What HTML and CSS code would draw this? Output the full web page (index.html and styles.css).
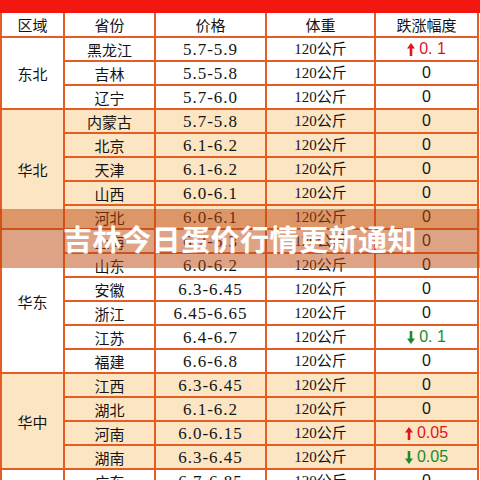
FILE: index.html
```html
<!DOCTYPE html>
<html lang="zh-CN">
<head>
<meta charset="utf-8">
<title>吉林今日蛋价行情更新通知</title>
<link rel="stylesheet" href="styles.css">
</head>
<body>
<div class="page">
  <div class="topbar"></div>
  <div class="grid">
    <div class="cell head">区域</div>
    <div class="cell head">省份</div>
    <div class="cell head">价格</div>
    <div class="cell head">体重</div>
    <div class="cell head">跌涨幅度</div>

    <div class="cell region span3">东北</div>
    <div class="cell prov">黑龙江</div><div class="cell price">5.7-5.9</div><div class="cell wt">120公斤</div><div class="cell chg"><span class="up"><svg class="arr" viewBox="0 0 8 13"><path d="M4 0 L8 5.5 L5.3 5.5 L5.3 13 L2.7 13 L2.7 5.5 L0 5.5 Z"/></svg>0. 1</span></div>
    <div class="cell prov">吉林</div><div class="cell price">5.5-5.8</div><div class="cell wt">120公斤</div><div class="cell chg">0</div>
    <div class="cell prov">辽宁</div><div class="cell price">5.7-6.0</div><div class="cell wt">120公斤</div><div class="cell chg">0</div>

    <div class="cell region tint span5">华北</div>
    <div class="cell prov tint">内蒙古</div><div class="cell price tint">5.7-5.8</div><div class="cell wt tint">120公斤</div><div class="cell chg tint">0</div>
    <div class="cell prov tint">北京</div><div class="cell price tint">6.1-6.2</div><div class="cell wt tint">120公斤</div><div class="cell chg tint">0</div>
    <div class="cell prov tint">天津</div><div class="cell price tint">6.1-6.2</div><div class="cell wt tint">120公斤</div><div class="cell chg tint">0</div>
    <div class="cell prov tint">山西</div><div class="cell price tint">6.0-6.1</div><div class="cell wt tint">120公斤</div><div class="cell chg tint">0</div>
    <div class="cell prov tint">河北</div><div class="cell price tint">6.0-6.1</div><div class="cell wt tint">120公斤</div><div class="cell chg tint">0</div>

    <div class="cell region span6">华东</div>
    <div class="cell prov">上海</div><div class="cell price">6.2-6.3</div><div class="cell wt">120公斤</div><div class="cell chg">0</div>
    <div class="cell prov">山东</div><div class="cell price">6.0-6.2</div><div class="cell wt">120公斤</div><div class="cell chg">0</div>
    <div class="cell prov">安徽</div><div class="cell price">6.3-6.45</div><div class="cell wt">120公斤</div><div class="cell chg">0</div>
    <div class="cell prov">浙江</div><div class="cell price">6.45-6.65</div><div class="cell wt">120公斤</div><div class="cell chg">0</div>
    <div class="cell prov">江苏</div><div class="cell price">6.4-6.7</div><div class="cell wt">120公斤</div><div class="cell chg"><span class="down"><svg class="arr" viewBox="0 0 8 13"><path d="M4 13 L8 7.5 L5.3 7.5 L5.3 0 L2.7 0 L2.7 7.5 L0 7.5 Z"/></svg>0. 1</span></div>
    <div class="cell prov">福建</div><div class="cell price">6.6-6.8</div><div class="cell wt">120公斤</div><div class="cell chg">0</div>

    <div class="cell region tint span4">华中</div>
    <div class="cell prov tint">江西</div><div class="cell price tint">6.3-6.45</div><div class="cell wt tint">120公斤</div><div class="cell chg tint">0</div>
    <div class="cell prov tint">湖北</div><div class="cell price tint">6.1-6.2</div><div class="cell wt tint">120公斤</div><div class="cell chg tint">0</div>
    <div class="cell prov tint">河南</div><div class="cell price tint">6.0-6.15</div><div class="cell wt tint">120公斤</div><div class="cell chg tint"><span class="up"><svg class="arr" viewBox="0 0 8 13"><path d="M4 0 L8 5.5 L5.3 5.5 L5.3 13 L2.7 13 L2.7 5.5 L0 5.5 Z"/></svg>0.05</span></div>
    <div class="cell prov tint">湖南</div><div class="cell price tint">6.3-6.45</div><div class="cell wt tint">120公斤</div><div class="cell chg tint"><span class="down"><svg class="arr" viewBox="0 0 8 13"><path d="M4 13 L8 7.5 L5.3 7.5 L5.3 0 L2.7 0 L2.7 7.5 L0 7.5 Z"/></svg>0.05</span></div>

    <div class="cell region span3">华南</div>
    <div class="cell prov">广东</div><div class="cell price">6.7-6.85</div><div class="cell wt">120公斤</div><div class="cell chg">0</div>
    <div class="cell prov">广西</div><div class="cell price">6.5-6.7</div><div class="cell wt">120公斤</div><div class="cell chg">0</div>
    <div class="cell prov">海南</div><div class="cell price">6.8-7.0</div><div class="cell wt">120公斤</div><div class="cell chg">0</div>
  </div>
  <div class="band"><h1 class="title">吉林今日蛋价行情更新通知</h1></div>
</div>
</body>
</html>
```

FILE: styles.css
```css
* { box-sizing: border-box; }
html, body { margin: 0; padding: 0; background: #fff; }
body { width: 480px; height: 480px; overflow: hidden; }

.page { position: relative; width: 480px; height: 480px; overflow: hidden; }

.topbar { height: 13px; background: #f2170f; }

.grid {
  display: grid;
  grid-template-columns: 61px 89px 109px 107px 101px;
  grid-template-rows: 23px;
  grid-auto-rows: 22px;
  gap: 2px;
  padding: 0 2px 2px 2px;
  width: 479px;
  background: #e55d25;
}

.cell {
  background: #fff;
  display: flex;
  align-items: center;
  justify-content: center;
  color: #141414;
  font-family: "Noto Sans CJK SC", sans-serif;
  font-size: 15px;
  line-height: 1;
  white-space: nowrap;
}
.tint { background: #fce5c3; }

.head { font-size: 15px; }
.region { font-size: 15px; }
.span3 { grid-row: span 3; }
.span4 { grid-row: span 4; }
.span5 { grid-row: span 5; }
.span6 { grid-row: span 6; }

.price {
  font-family: "Liberation Serif", serif;
  font-size: 17px;
  letter-spacing: 1px;
}
.wt {
  font-family: "Liberation Serif", "Noto Sans CJK SC", serif;
  font-size: 15px;
}
.chg {
  font-family: "Liberation Sans", sans-serif;
  font-size: 16px;
  white-space: pre;
}
.up, .down { display: inline-flex; align-items: center; white-space: pre; }
.up { color: #e3141c; }
.down { color: #1c8a2c; }
.arr { width: 8px; height: 13px; margin-right: 4px; fill: currentColor; }

.band {
  position: absolute;
  left: 0;
  top: 209px;
  width: 480px;
  height: 59px;
  background: rgba(190, 72, 12, 0.5);
  display: flex;
  align-items: center;
  justify-content: center;
}
.title {
  margin: 0;
  color: #fff;
  font-family: "Noto Sans CJK SC", sans-serif;
  font-weight: 700;
  font-size: 29px;
  letter-spacing: 0.5px;
  line-height: 1;
}
```
